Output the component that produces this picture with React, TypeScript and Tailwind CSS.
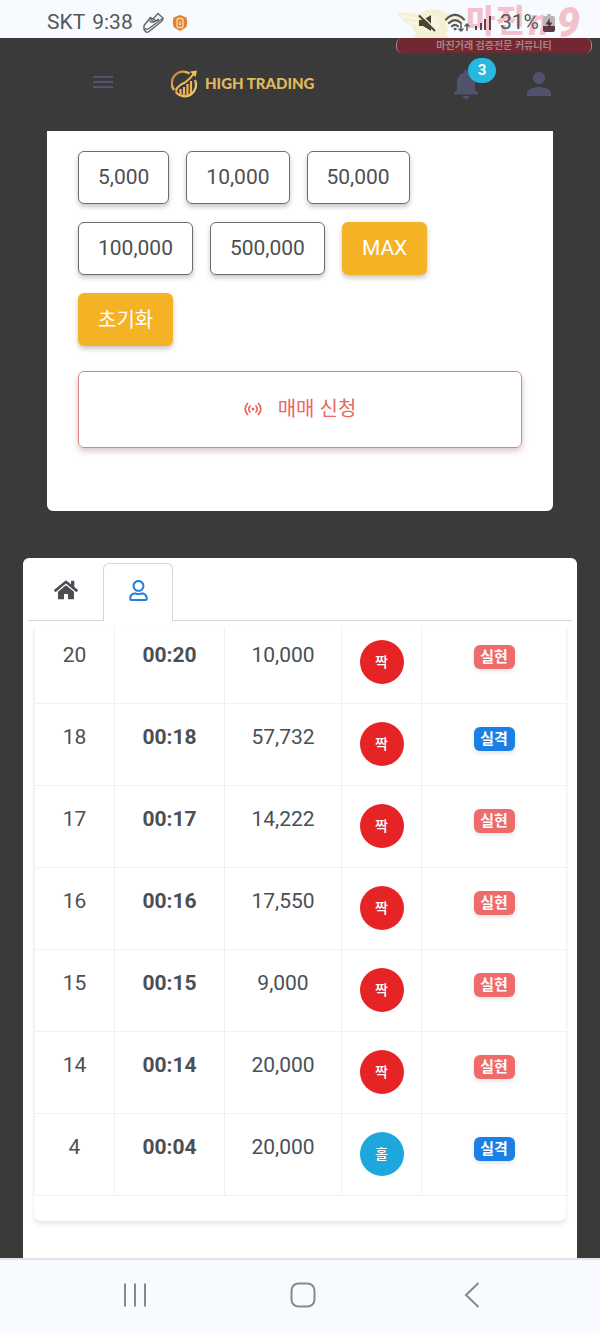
import { MdNotifications, MdPerson } from "react-icons/md"
import { FaHome, FaRegUser } from "react-icons/fa"

const amounts = ["5,000", "10,000", "50,000", "100,000", "500,000"]

const trades = [
  { round: 20, time: "00:20", amount: "10,000", pick: "짝", result: "실현" },
  { round: 18, time: "00:18", amount: "57,732", pick: "짝", result: "실격" },
  { round: 17, time: "00:17", amount: "14,222", pick: "짝", result: "실현" },
  { round: 16, time: "00:16", amount: "17,550", pick: "짝", result: "실현" },
  { round: 15, time: "00:15", amount: "9,000", pick: "짝", result: "실현" },
  { round: 14, time: "00:14", amount: "20,000", pick: "짝", result: "실현" },
  { round: 4, time: "00:04", amount: "20,000", pick: "홀", result: "실격" },
]

function Watermark() {
  return (
    <div className="pointer-events-none absolute right-2 top-0 h-[53px] w-[196px]">
      <svg className="absolute left-0 top-2 opacity-50" width="70" height="30" viewBox="0 0 70 30">
        <path
          d="M1 4 L24 6 Q30 0 38 2 Q46 0 50 5 L67 8 Q62 15 50 18 Q54 22 50 26 L53 30 H17 L21 25 Q15 22 17 18 Q6 14 1 4Z"
          fill="#f3e6a4"
        />
        <path d="M6 8 L22 11 M12 14 L22 16 M51 12 L60 11 M50 16 L56 15" stroke="#fbf6dc" strokeWidth="2" />
        <circle cx="35" cy="15" r="9" fill="#f8efc4" />
      </svg>
      <div className="absolute left-[70px] top-0 flex h-[38px] items-center whitespace-nowrap font-black leading-none text-[#f0526a]/35">
        <span className="pt-1 text-[32px]">마진</span>
        <span className="pl-1 pt-2 text-[36px] italic">n</span>
        <span className="pl-2 pt-2 text-[42px] italic">9</span>
      </div>
      <div className="absolute inset-x-0 top-[38px] h-[15px] rounded-md border-x border-[#a08488] bg-[#722830] text-center text-[10px] font-bold leading-[15px] text-[#a38487]">
        마진거래 검증전문 커뮤니티
      </div>
    </div>
  )
}

function StatusBar() {
  return (
    <div className="relative flex h-[38px] items-center justify-between bg-[#f7fbff] pl-[47px] pr-[45px] pt-[7px] text-[21px] text-[#55585b]">
      <Watermark />
      <div className="flex items-center gap-[7px]">
        <span>SKT</span>
        <span>9:38</span>
        <svg className="ml-[2px]" width="23" height="22" viewBox="0 0 23 22" fill="none" stroke="#606366" strokeWidth="1.4" strokeLinejoin="round" strokeLinecap="round">
          <path d="M2 13.5 L8.5 5.5 L11 7 L16 1.500 L21 6 Q21.500 8 19.500 9.500 L7 19.500 Q5 21 3.500 19.500 L2 17.500Z" />
          <path d="M3 16.500 Q5 18 7 16.500 L20.500 6.500 M8 6 L11.500 10 L16.500 7.500 M10 10.500 L7.500 9 M11.500 7 L13.500 8.500" />
        </svg>
        <svg width="16" height="18" viewBox="0 0 16 18">
          <path d="M8 1 L14.500 3.500 Q16 8 14.500 13 L8 17 L1.500 13 Q0 8 1.500 3.500Z" fill="#e5802f" />
          <rect x="5" y="4.500" width="6" height="9" rx="1.500" fill="none" stroke="#fbdcb8" strokeWidth="1.300" />
          <path d="M8 7 V11 M6.500 9.500 L8 11 L9.500 9.500" stroke="#fbdcb8" strokeWidth="1" fill="none" />
        </svg>
      </div>
      <div className="relative flex items-center gap-1">
        <svg className="mr-1" width="18" height="18" viewBox="0 0 18 18">
          <path d="M1 6 H5 L13 1 V17 L5 12 H1Z" fill="#4a4636" />
          <path d="M2.500 0.500 L17.500 15" stroke="#f4f0d2" strokeWidth="1.500" />
          <path d="M1 1.500 L17 17" stroke="#4a4636" strokeWidth="2" />
        </svg>
        <svg width="27" height="20" viewBox="0 0 27 20" fill="none" stroke="#55585b" strokeLinecap="round">
          <path d="M2 6.500 Q11 -2.500 20 6.500" strokeWidth="2.200" />
          <path d="M5 10 Q11 4 17 10" strokeWidth="2.200" />
          <path d="M8 13.300 Q11 10.500 14 13.300" strokeWidth="2.200" />
          <circle cx="11" cy="16" r="1" fill="#55585b" />
          <path d="M17 11.500 V18 M15 16 L17 18 L19 16 M23 17.500 V11 M21 13 L23 11 L25 13" strokeWidth="1.500" />
        </svg>
        <svg width="17" height="16" viewBox="0 0 17 16" fill="#5d3f48">
          <rect x="0" y="11" width="2" height="4" />
          <rect x="5" y="8" width="2" height="7" />
          <rect x="9" y="4" width="2" height="11" />
          <rect x="14" y="1" width="2" height="14" />
        </svg>
        <span className="pl-1">31%</span>
        <svg width="12" height="18" viewBox="0 0 12 18">
          <path d="M4 0 H8 V2 H10 Q12 2 12 4 V12 H0 V4 Q0 2 2 2 H4Z" fill="#b9b5ba" />
          <path d="M0 12 H12 V16 Q12 18 10 18 H2 Q0 18 0 16Z" fill="#573c44" />
          <path d="M7 4 L2.500 10.500 H5.500 L5 15 L9.500 8.500 H6.500Z" fill="#5a3039" />
        </svg>
      </div>
    </div>
  )
}

function Header() {
  return (
    <header className="flex h-[93px] items-center pb-[2px] pl-[93px] pr-[43px] text-[#50536b]">
      <button aria-label="Menu" className="pb-1">
        <svg width="20" height="14" viewBox="0 0 20 14" stroke="currentColor" strokeWidth="2">
          <path d="M0 2 H20 M0 7 H20 M0 12 H20" />
        </svg>
      </button>
      <a href="#" className="ml-[58px] flex items-center gap-[7px]">
        <svg width="27" height="28" viewBox="0 0 27 28" fill="none">
          <defs>
            <linearGradient id="gold" x1="0" y1="0" x2="1" y2="1">
              <stop offset="0" stopColor="#c06a34" />
              <stop offset="0.5" stopColor="#efb94f" />
              <stop offset="1" stopColor="#f3d27a" />
            </linearGradient>
            <clipPath id="disc">
              <path d="M5 23 Q5 18 14 14 Q20 10 24.500 6 Q28 16 21 23 Q12 30 5 23Z" />
            </clipPath>
          </defs>
          <path d="M18.500 3.500 A11.500 11.500 0 0 0 3 20" stroke="url(#gold)" strokeWidth="2.300" />
          <path d="M24 10 A11.500 11.500 0 0 1 5.500 23 Q4.500 20.500 6 18.500" stroke="url(#gold)" strokeWidth="2.300" />
          <path d="M5 19.500 Q8 15 14 12.500 Q19 9 23 3.500" stroke="#f0bf5c" strokeWidth="2" />
          <path d="M19 1.500 L26 0.500 L24.500 7Z" fill="#f0bf5c" />
          <path
            d="M9.500 19 V27 M13 17 V27 M16.500 14 V27 M20 11 V27"
            stroke="#eeb352"
            strokeWidth="2.200"
            clipPath="url(#disc)"
          />
        </svg>
        <span className="font-[Lato] text-[15px] font-black text-[#e2b95c]">HIGH TRADING</span>
      </a>
      <div className="ml-auto flex items-center gap-[37px]">
        <button aria-label="Notifications" className="relative">
          <MdNotifications size={36} />
          <span className="absolute -top-2 left-5 flex h-[25px] w-7 items-center justify-center rounded-full bg-[#27b8e0] text-[15px] font-bold text-white">
            3
          </span>
        </button>
        <button aria-label="Profile">
          <MdPerson size={36} />
        </button>
      </div>
    </header>
  )
}

function OrderCard() {
  return (
    <section className="mx-[47px] rounded-b-md bg-white px-[31px] pb-[63px] pt-5">
      <div className="flex flex-wrap gap-x-[17px] gap-y-[18px]">
        {amounts.map((amount) => (
          <button
            key={amount}
            className="h-[53px] rounded-md border border-[#6c6c70] bg-white px-[19px] text-[21px] shadow-[0_3px_5px_rgba(0,0,0,0.22)]"
          >
            {amount}
          </button>
        ))}
        <button className="h-[53px] rounded-md bg-[#f5b225] px-5 text-[21px] text-white shadow-[0_3px_5px_rgba(0,0,0,0.22)]">
          MAX
        </button>
        <button className="h-[53px] rounded-md bg-[#f5b225] px-5 text-xl text-white shadow-[0_3px_5px_rgba(0,0,0,0.22)]">
          초기화
        </button>
      </div>
      <button className="mt-[25px] flex h-[77px] w-full items-center justify-center gap-4 rounded-md border border-[#d98584] pb-[2px] text-xl text-[#ea6663] shadow-[0_3px_6px_rgba(120,40,60,0.28)]">
        <svg width="18" height="14" viewBox="0 0 18 14" fill="none" stroke="currentColor" strokeWidth="1.700" strokeLinecap="round">
          <path d="M3.500 1.500 Q-1.200 7 3.500 12.500 M14.500 1.500 Q19.200 7 14.500 12.500 M6 4 Q3.500 7 6 10 M12 4 Q14.500 7 12 10" />
          <circle cx="9" cy="7" r="1.500" fill="currentColor" stroke="none" />
        </svg>
        매매 신청
      </button>
    </section>
  )
}

function HistoryCard() {
  return (
    <section className="mx-[23px] mt-[47px] grow rounded-t-md bg-white px-[5px] pt-[5px]">
      <div className="flex border-b border-[#d3d5d7]">
        <button aria-label="All trades" className="flex h-[57px] w-[75px] items-center justify-center pb-1">
          <FaHome size={24} />
        </button>
        <button
          aria-label="My trades"
          className="-mb-px flex h-[58px] w-[70px] items-center justify-center rounded-t-md border border-b-0 border-[#d3d5d7] bg-white pb-1 text-[#1f7fe0]"
        >
          <FaRegUser size={21} />
        </button>
      </div>
      <div className="mx-[6px] mt-[6px] rounded-b-md pb-[25px] shadow-[0_3px_4px_rgba(0,0,0,0.1)]">
        <table className="w-full table-fixed border-collapse text-center text-[21px]">
          <colgroup>
            <col className="w-[80px]" />
            <col className="w-[110px]" />
            <col className="w-[117px]" />
            <col className="w-[80px]" />
            <col className="w-[145px]" />
          </colgroup>
          <tbody>
            {trades.map((trade) => (
              <tr key={trade.round} className="group h-[82px] border-b border-[#f1f1f2] align-top first:h-[76px]">
                <td className="border-x border-[#f1f1f2] pt-[18px] group-first:pt-[13px]">{trade.round}</td>
                <td className="border-x border-[#f1f1f2] pt-[18px] font-bold group-first:pt-[13px]">{trade.time}</td>
                <td className="border-x border-[#f1f1f2] pt-[18px] group-first:pt-[13px]">{trade.amount}</td>
                <td className="border-x border-[#f1f1f2] pt-[18px] group-first:pt-[13px]">
                  <span
                    className={`mx-auto flex size-11 items-center justify-center rounded-full text-sm font-medium text-white ${
                      trade.pick === "짝" ? "bg-[#e62425]" : "bg-[#1ea7dc]"
                    }`}
                  >
                    {trade.pick}
                  </span>
                </td>
                <td className="border-x border-[#f1f1f2] pt-[23px] group-first:pt-[18px]">
                  <span
                    className={`mx-auto block h-6 w-[41px] rounded-md text-[15px] font-bold leading-6 text-white shadow-[0_2px_4px_rgba(0,0,0,0.12)] ${
                      trade.result === "실현" ? "bg-[#ef6b6b]" : "bg-[#1b80e6]"
                    }`}
                  >
                    {trade.result}
                  </span>
                </td>
              </tr>
            ))}
          </tbody>
        </table>
      </div>
    </section>
  )
}

function NavBar() {
  return (
    <nav className="flex h-[75px] items-center justify-between border-t-2 border-[#e0e5e7] bg-[#f7fbff] pb-1 pl-[123px] pr-[120px] text-[#86898c]">
      <button aria-label="Recent apps">
        <svg width="24" height="24" viewBox="0 0 24 24" stroke="currentColor" strokeWidth="2">
          <path d="M2 0.500 V23.500 M12 0.500 V23.500 M22 0.500 V23.500" />
        </svg>
      </button>
      <button aria-label="Home">
        <svg width="26" height="26" viewBox="0 0 26 26" fill="none" stroke="currentColor" strokeWidth="2">
          <rect x="1.500" y="1.500" width="23" height="23" rx="7" />
        </svg>
      </button>
      <button aria-label="Back" className="flex w-[21px] justify-end">
        <svg width="16" height="26" viewBox="0 0 16 26" fill="none" stroke="currentColor" strokeWidth="2">
          <path d="M14.500 1 L2 13 L14.500 25" />
        </svg>
      </button>
    </nav>
  )
}

export default function App() {
  return (
    <div className="flex min-h-screen flex-col bg-[#3a3a3a] font-[Roboto,'Noto_Sans_CJK_KR',sans-serif] text-[#4b4f54]">
      <StatusBar />
      <Header />
      <OrderCard />
      <HistoryCard />
      <NavBar />
    </div>
  )
}
